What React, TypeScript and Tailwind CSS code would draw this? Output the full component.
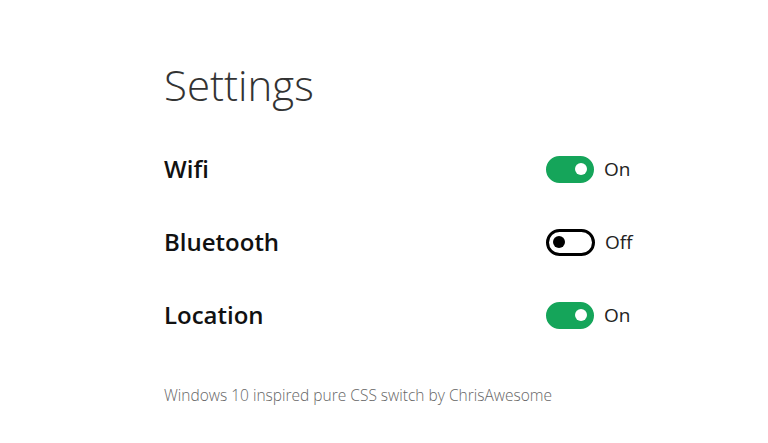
import { useState } from "react"

interface Setting {
  label: string
  on: boolean
}

const initial: Setting[] = [
  { label: "Wifi", on: true },
  { label: "Bluetooth", on: false },
  { label: "Location", on: true },
]

function Toggle({ on, onClick }: { on: boolean; onClick: () => void }) {
  return (
    <button
      onClick={onClick}
      className={
        on
          ? "flex h-[27px] w-[48px] items-center justify-end rounded-full border-[3px] border-[#15a55a] bg-[#15a55a] px-[4px]"
          : "flex h-[27px] w-[49px] items-center justify-start rounded-full border-[3px] border-black bg-white px-[4px]"
      }
    >
      <span
        className={
          on
            ? "block h-[12px] w-[12px] rounded-full bg-white"
            : "block h-[12px] w-[12px] rounded-full bg-black"
        }
      />
    </button>
  )
}

export default function App() {
  const [settings, setSettings] = useState<Setting[]>(initial)

  const flip = (i: number) =>
    setSettings((s) => s.map((x, j) => (j === i ? { ...x, on: !x.on } : x)))

  return (
    <div
      className="min-h-[443px] w-full bg-white pl-[164px] pt-[56px] text-[#1a1a1a]"
      style={{ fontFamily: '"Open Sans", "Liberation Sans", sans-serif' }}
    >
      <h1 className="text-[42px] font-light leading-[58px] text-[#333]">Settings</h1>

      <div className="mt-[40px] flex flex-col gap-[43px]">
        {settings.map((s, i) => (
          <div key={s.label} className="flex h-[30px] items-center">
            <div className="w-[382px] text-[24px] font-semibold text-[#111]">{s.label}</div>
            <Toggle on={s.on} onClick={() => flip(i)} />
            <span className="ml-[10px] text-[19px] text-[#222]">{s.on ? "On" : "Off"}</span>
          </div>
        ))}
      </div>

      <p className="mt-[54px] text-[15.5px] font-light text-[#666]">
        Windows 10 inspired pure CSS switch by ChrisAwesome
      </p>
    </div>
  )
}
